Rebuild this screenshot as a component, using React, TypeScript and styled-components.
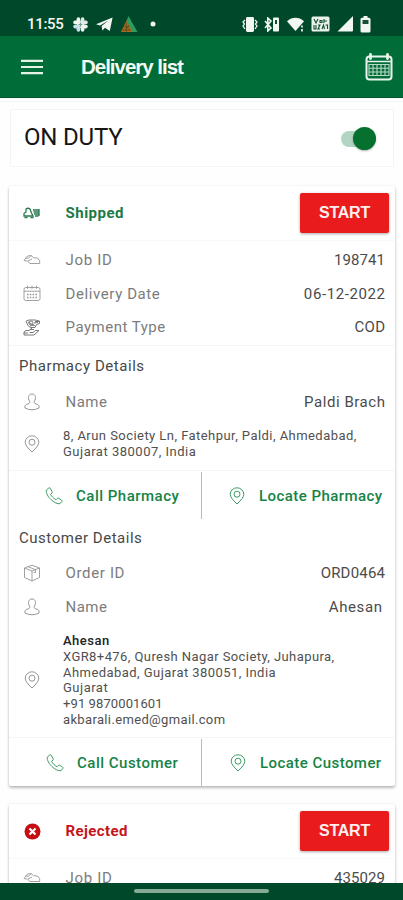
import React from "react";
import styled, { createGlobalStyle } from "styled-components";

const Global = createGlobalStyle`
  * { box-sizing: border-box; }
  body { margin: 0; background: #fefefe; font-family: Roboto, "Liberation Sans", sans-serif; }
`;

const Screen = styled.div`
  width: 100%;
  height: 900px;
  display: flex;
  flex-direction: column;
  overflow: hidden;
  background: #fefefe;
`;

const StatusBar = styled.div`
  flex: none;
  height: 36px;
  padding: 12px 32px 0 27px;
  display: flex;
  justify-content: space-between;
  background: #00482a;
  color: #f4f8f4;
`;

const StatusGroup = styled.div<{ $gap: number }>`
  display: flex;
  align-items: center;
  gap: ${(p) => p.$gap}px;
  height: 24px;
`;

const Clock = styled.span`
  font: 500 15px/24px Roboto, sans-serif;
  letter-spacing: -0.3px;
  width: 38px;
  white-space: nowrap;
`;

const Header = styled.header`
  flex: none;
  height: 62px;
  padding: 0 10px 0 21px;
  display: flex;
  align-items: center;
  background: #006c38;
  color: #f4faf4;
  border-bottom: 1px solid #005a2c;
`;

const Title = styled.h1`
  flex: 1;
  margin: 0 0 0 38px;
  font: 700 20.5px/28px "Liberation Sans", sans-serif;
  letter-spacing: -1.02px;
`;

const Content = styled.main`
  flex: 1;
  min-height: 0;
  overflow: hidden;
  margin-top: 3px;
  padding: 7px 8px 0 9px;
  border-top: 1px solid #eef5f4;
`;

const DutyCard = styled.section`
  height: 58px;
  margin: 0 1px 19px;
  padding: 1px 17px 0 13px;
  display: flex;
  align-items: center;
  justify-content: space-between;
  border: 1px solid #f3f4f4;
  border-radius: 2px;
  background: #fff;
`;

const DutyLabel = styled.span`
  font: 400 24px/28px Roboto, sans-serif;
  letter-spacing: -0.2px;
  color: #161616;
  margin-top: -3px;
`;

const SwitchTrack = styled.span`
  width: 35px;
  height: 16px;
  border-radius: 8px;
  background: #b0d5c2;
  display: flex;
  align-items: center;
  justify-content: flex-end;
`;

const SwitchThumb = styled.span`
  flex: none;
  width: 23px;
  height: 23px;
  border-radius: 50%;
  background: #06702f;
  box-shadow: 0 1px 2px rgba(0, 0, 0, 0.3);
`;

const Card = styled.article`
  height: 600px;
  margin-bottom: 18px;
  padding-right: 1px;
  background: #fff;
  border-radius: 2px;
  box-shadow: 0 2px 3px rgba(0, 0, 0, 0.26), 0 0 2px rgba(0, 0, 0, 0.1);
`;

const CardHead = styled.div`
  height: 55px;
  padding: 0 5px 0 12px;
  display: flex;
  align-items: center;
  border-bottom: 1px solid #f8f8f8;
`;

const Status = styled.span<{ $color: string; $ls: number }>`
  flex: 1;
  margin-left: 22.5px;
  font-weight: 700;
  font-size: 15px;
  letter-spacing: ${(p) => p.$ls}px;
  color: ${(p) => p.$color};
`;

const StartButton = styled.button`
  width: 89px;
  height: 40px;
  padding: 0;
  border: 0;
  border-radius: 2px;
  background: #e91b1d;
  color: #fff0ee;
  font: 700 16px/40px "Liberation Sans", sans-serif;
  letter-spacing: -0.25px;
  box-shadow: 0 1px 3px rgba(0, 0, 0, 0.35);
`;

const Rows = styled.div<{ $h: number; $pad: number }>`
  height: ${(p) => p.$h}px;
  padding-top: ${(p) => p.$pad}px;
  border-bottom: 1px solid #f5f5f5;
`;

const Row = styled.div<{ $h?: number }>`
  height: ${(p) => p.$h ?? 33.7}px;
  padding: 0 9px 0 12px;
  display: flex;
  align-items: center;
`;

const IconBox = styled.span`
  flex: none;
  width: 22px;
  height: 22px;
  display: flex;
  align-items: center;
  justify-content: center;
`;

const Label = styled.span<{ $ls: number }>`
  flex: 1;
  margin-left: 22.5px;
  font-size: 15px;
  letter-spacing: ${(p) => p.$ls}px;
  color: #7c7c7c;
`;

const Value = styled.span<{ $ls: number; $inset?: number }>`
  font-size: 15px;
  letter-spacing: ${(p) => p.$ls}px;
  margin-right: ${(p) => (p.$inset ?? 0) - p.$ls}px;
  color: #4b4b4b;
`;

const SectionTitle = styled.h2<{ $ls: number }>`
  margin: 0;
  height: 37px;
  padding-left: 10px;
  font: 400 15px/37px Roboto, sans-serif;
  letter-spacing: ${(p) => p.$ls}px;
  color: #484848;
`;

const Address = styled.div`
  margin-left: 20px;
  color: #505050;
`;

const AddressLine = styled.div<{ $ls: number; $strong?: boolean }>`
  font-size: 13px;
  line-height: 15.8px;
  white-space: nowrap;
  letter-spacing: ${(p) => p.$ls}px;
  font-weight: ${(p) => (p.$strong ? 500 : 400)};
  color: ${(p) => (p.$strong ? "#222" : "inherit")};
`;

const Actions = styled.div`
  height: 48px;
  padding-top: 1px;
  display: grid;
  grid-template-columns: 193px 1fr;
`;

const Action = styled.button<{ $left: number; $gap: number; $ls: number }>`
  border: 0;
  border-right: 1px solid transparent;
  background: transparent;
  padding: 0 0 0 ${(p) => p.$left}px;
  display: flex;
  align-items: center;
  gap: ${(p) => p.$gap}px;
  font: 500 15px/20px Roboto, sans-serif;
  letter-spacing: ${(p) => p.$ls}px;
  white-space: nowrap;
  color: #168345;
  &:first-child { border-right-color: #b9b9b9; }
`;

const NavBar = styled.footer`
  flex: none;
  height: 17px;
  display: flex;
  justify-content: center;
  padding-top: 6px;
  background: #00482a;
`;

const NavPill = styled.span`
  width: 135px;
  height: 4px;
  border-radius: 2px;
  background: #86aa94;
`;

const GRAY = "#969696";
const GREEN = "#3c9a68";

const SlackIcon = () => (
  <svg width="15" height="15" viewBox="0 0 15 15" fill="none" strokeWidth="3.6" strokeLinecap="round">
    <path d="M5.4 2v5M2 5.4h3" stroke="#f2f7f3" />
    <path d="M8 5.4h5M9.6 2v2" stroke="#dce9e8" />
    <path d="M9.6 8v5M10 9.6h3" stroke="#f2f7f3" />
    <path d="M2 9.6h5M5.4 11v2" stroke="#c9dfe8" />
    <path d="M6 7.500h3M7.500 6v3" stroke="#6f9b8b" strokeWidth="1" />
  </svg>
);
const PlaneIcon = () => (
  <svg width="17" height="15" viewBox="0 0 17 15">
    <path fill="#f2f7f3" d="M0 7.2 16.6.6 13.8 14 9 10.8 6.4 13.6 5.6 9 12.5 3.6 4 8.4z" />
  </svg>
);
const TreeIcon = () => (
  <svg width="17" height="16" viewBox="0 0 17 16">
    <path d="M7.5 0 16.5 16h-6L5.5 5z" fill="#2c9d5c" />
    <path d="M5.6 4.5 11.5 16H0z" fill="#b06a1e" />
    <path d="M3 11h6M1.5 14h9M5.5 7v9M4 9l5 6M8 9l-5 6" stroke="#4c4515" strokeWidth=".6" />
  </svg>
);
const DotIcon = () => (
  <svg width="14" height="6" viewBox="0 0 14 6">
    <circle cx="7" cy="3" r="2.500" fill="#eef6ef" />
  </svg>
);
const VibrateIcon = () => (
  <svg width="16" height="15" viewBox="0 0 16 15" fill="none" stroke="#f2f7f3" strokeWidth="1.3">
    <rect x="4" y="0" width="8" height="15" rx="1.4" fill="#f2f7f3" stroke="none" />
    <path d="m3 3-2 2 1.500 2L1 9l2 3M13 3l2 2-1.500 2L15 9l-2 3" />
  </svg>
);
const BluetoothIcon = () => (
  <svg width="16" height="15" viewBox="0 0 16 15">
    <path d="m1 4 6 7-3.200 3V1L7 4l-6 7" fill="none" stroke="#f2f7f3" strokeWidth="1.6" />
    <rect x="9" y=".5" width="6" height="14" rx="1" fill="#f2f7f3" />
    <rect x="11" y="3" width="2" height="4" fill="#174d34" />
  </svg>
);
const WifiIcon = () => (
  <svg width="18" height="15" viewBox="0 0 18 15">
    <path d="M0 4.200C5-.3 12-.3 17 4.200L8.500 14z" fill="#f2f7f3" />
    <path d="M15 8.500v2M15 12v2.500" stroke="#dce9e1" strokeWidth="1.8" />
  </svg>
);
const VolteIcon = () => (
  <svg width="19" height="16" viewBox="0 0 19 16" fill="none" stroke="#174d34" strokeWidth="1.100">
    <rect x=".5" y=".5" width="18" height="15" rx="1.500" fill="#e8f1ea" stroke="none" />
    <path d="m3 3 2 4 2-4M9 4.500h2v2H9zM13 3v4M13 5h3M3 9v4h2V9M7 9h2l-2 4h2M11 13l1.500-4 1 4M14.500 9h2v4" />
  </svg>
);
const SignalIcon = () => (
  <svg width="17" height="16" viewBox="0 0 17 16">
    <path d="M16 0v14.500q0 1-1 1H.5z" fill="#f2f7f3" />
  </svg>
);
const BatteryIcon = () => (
  <svg width="11" height="17" viewBox="0 0 11 17">
    <path d="M3.500 0h4v1.700H9q1.500 0 1.500 1.500V15q0 1.500-1.500 1.500H2Q.5 16.500.5 15V3.200Q.5 1.700 2 1.700h1.500z" fill="#f2f7f3" />
    <rect x="2.500" y="4" width="6" height="4" rx=".5" fill="#174d34" />
  </svg>
);
const MenuIcon = () => (
  <svg width="22" height="16" viewBox="0 0 22 16" stroke="#e6f2e6" strokeWidth="2.200">
    <path d="M0 1.900h22M0 8h22M0 14.100h22" />
  </svg>
);
const CalendarGridIcon = () => (
  <svg width="28" height="28" viewBox="0 0 28 28" fill="none" stroke="#e9f5ec">
    <rect x="1.500" y="3.500" width="25" height="23" rx="3" strokeWidth="2" />
    <path d="M5.500 1.500v4M22.500 1.500v4" strokeWidth="2.800" strokeLinecap="round" />
    <path d="M2 8.500h24" strokeWidth="1.500" />
    <path d="M4 11.500h20v11H4zM4 15.200h20M4 19h20M8 11.500v11M12 11.500v11M16 11.500v11M20 11.500v11" strokeWidth="1.100" opacity=".8" />
  </svg>
);
const ShippedIcon = () => (
  <svg width="18" height="13" viewBox="0 0 18 13" fill="none" stroke="#287b50" strokeWidth="1.300">
    <path d="M1 9V6.500L3 5V2q2-1.500 4 0l1.500 4L10 9H1z" />
    <path d="M1.500 10.500h3M7.500 10.500h3M10 3h6.500M10.500 5h6M11 7h5M12 9h3.500M16 2v7" />
  </svg>
);
const JobIcon = () => (
  <svg width="18" height="13" viewBox="0 0 18 13" fill="none" stroke={GRAY} strokeWidth=".9">
    <path d="M1 7.500 4.500 3 8 2.500l2.500 2.200 4 .3 2.200 2.800v2.700H7L4.500 8.200 1 7.500zM5 8l4-2" />
    <path d="m2.500 5 3 .3L8 2.500" />
  </svg>
);
const DateIcon = () => (
  <svg width="18" height="17" viewBox="0 0 18 17" fill="none" stroke={GRAY} strokeWidth=".9">
    <rect x="1" y="2.500" width="16" height="13" rx="1.800" />
    <path d="M1 6.200h16M4.500.8v3M9 .8v3M13.500.8v3" />
    <path d="M4 9.500h10M4 12.500h10" strokeWidth="1.300" strokeDasharray="1.500 1.300" />
  </svg>
);
const PaymentIcon = () => (
  <svg width="18" height="17" viewBox="0 0 18 17" fill="none" stroke="#777" strokeWidth="1">
    <path d="M3 2.200 6 1h6l4.500 1v2.500l-3 1-1.500 3H7.500L5 6.500z" />
    <circle cx="8" cy="4" r="2" />
    <path d="m5 3 7 4M12 2.500h4M11 4l4-.5M7 7l4-1M9 9l-3 2.500H3L1 13v3h10l5-4.500h-3.500L10 13.500H6.500M1 14h4M7 10.500h4" />
  </svg>
);
const PersonIcon = () => (
  <svg width="16" height="18" viewBox="0 0 16 18" fill="none" stroke={GRAY} strokeWidth="1">
    <path d="M5.600 8.200C4.500 6.800 4.300 4.700 4.700 3.300 5.100 1.700 6.300 1 8 1s2.900.7 3.300 2.300c.4 1.400.2 3.500-.9 4.900-.5.600-.3 1.900.6 2.300l2.600 1c1.600.7 1.700 2.300 1.300 3.600Q8 18.500 1.100 15.100c-.4-1.300-.3-2.900 1.300-3.600l2.600-1c.9-.4 1.100-1.700.6-2.300z" />
  </svg>
);
const PinIcon = ({ color = GRAY }: { color?: string }) => (
  <svg width="16" height="18" viewBox="0 0 16 18" fill="none" stroke={color} strokeWidth="1">
    <path d="M8 17Q1.200 10.800 1.200 7.300a6.800 6.500 0 0 1 13.600 0Q14.800 10.800 8 17z" />
    <circle cx="8" cy="7.200" r="3" />
  </svg>
);
const PhoneIcon = () => (
  <svg width="18" height="18" viewBox="0 0 18 18" fill="none" stroke={GREEN} strokeWidth="1">
    <path d="M3.800 1 1.300 3.100C.7 6 3.200 10 6 12.600c2.800 2.600 6.400 4.600 9 4.100l2-2.400q.3-.7-.4-1.200l-3-1.900q-.8-.4-1.300.2l-1.200 1.300C9.200 12 6.200 9 5.600 7.400L7 6q.5-.5.200-1.200L5.200 1.200Q4.500.4 3.800 1z" />
  </svg>
);
const BoxIcon = () => (
  <svg width="18" height="18" viewBox="0 0 18 18" fill="none" stroke={GRAY} strokeWidth=".9">
    <path d="M9 1.200 16.500 4v9.500L9 17l-7.500-3.500V4zM1.500 4 9 7l7.500-3M9 7v10M5 2.700l7.500 3v3l-2-.4" />
  </svg>
);
const RejectedIcon = () => (
  <svg width="17" height="17" viewBox="0 0 17 17">
    <circle cx="8.500" cy="8.500" r="8" fill="#c50f14" />
    <path d="m5.500 5.500 6 6m0-6-6 6" stroke="#fff" strokeWidth="2.200" />
  </svg>
);

type FieldProps = {
  icon: React.ReactNode;
  label: string;
  value: string;
  ls: number;
  vls: number;
  inset?: number;
};
const Field = ({ icon, label, value, ls, vls, inset }: FieldProps) => (
  <Row>
    <IconBox>{icon}</IconBox>
    <Label $ls={ls}>{label}</Label>
    <Value $ls={vls} $inset={inset}>{value}</Value>
  </Row>
);

export default function App() {
  return (
    <Screen>
      <Global />
      <StatusBar>
        <StatusGroup $gap={8}>
          <Clock>11:55</Clock>
          <SlackIcon />
          <PlaneIcon />
          <TreeIcon />
          <DotIcon />
        </StatusGroup>
        <StatusGroup $gap={6.5}>
          <VibrateIcon />
          <BluetoothIcon />
          <WifiIcon />
          <VolteIcon />
          <SignalIcon />
          <BatteryIcon />
        </StatusGroup>
      </StatusBar>
      <Header>
        <MenuIcon />
        <Title>Delivery list</Title>
        <CalendarGridIcon />
      </Header>
      <Content>
        <DutyCard>
          <DutyLabel>ON DUTY</DutyLabel>
          <SwitchTrack><SwitchThumb /></SwitchTrack>
        </DutyCard>
        <Card>
          <CardHead>
            <IconBox><ShippedIcon /></IconBox>
            <Status $color="#1c7a45" $ls={0.5}>Shipped</Status>
            <StartButton>START</StartButton>
          </CardHead>
          <Rows $h={105} $pad={2}>
            <Field icon={<JobIcon />} label="Job ID" value="198741" ls={0.7} vls={0.1} />
            <Field icon={<DateIcon />} label="Delivery Date" value="06-12-2022" ls={0.6} vls={0.6} />
            <Field icon={<PaymentIcon />} label="Payment Type" value="COD" ls={0.5} vls={0.3} />
          </Rows>
          <Rows $h={125} $pad={2}>
            <SectionTitle $ls={0.55}>Pharmacy Details</SectionTitle>
            <Field icon={<PersonIcon />} label="Name" value="Paldi Brach" ls={0.5} vls={0.55} />
            <Row $h={50}>
              <IconBox><PinIcon /></IconBox>
              <Address>
                <AddressLine $ls={0.45}>8, Arun Society Ln, Fatehpur, Paldi, Ahmedabad,</AddressLine>
                <AddressLine $ls={0.5}>Gujarat 380007, India</AddressLine>
              </Address>
            </Row>
          </Rows>
          <Actions>
            <Action $left={36} $gap={13} $ls={0.5}><PhoneIcon />Call Pharmacy</Action>
            <Action $left={27} $gap={14} $ls={0.45}><PinIcon color={GREEN} />Locate Pharmacy</Action>
          </Actions>
          <Rows $h={219} $pad={0.5}>
            <SectionTitle $ls={0.53}>Customer Details</SectionTitle>
            <Field icon={<BoxIcon />} label="Order ID" value="ORD0464" ls={0.65} vls={0.2} />
            <Field icon={<PersonIcon />} label="Name" value="Ahesan" ls={0.5} vls={0.6} inset={3} />
            <Row $h={113}>
              <IconBox><PinIcon /></IconBox>
              <Address>
                <AddressLine $ls={0.5} $strong>Ahesan</AddressLine>
                <AddressLine $ls={0.42}>XGR8+476, Quresh Nagar Society, Juhapura,</AddressLine>
                <AddressLine $ls={0.45}>Ahmedabad, Gujarat 380051, India</AddressLine>
                <AddressLine $ls={0.5}>Gujarat</AddressLine>
                <AddressLine $ls={0.1}>+91 9870001601</AddressLine>
                <AddressLine $ls={0.35}>akbarali.emed@gmail.com</AddressLine>
              </Address>
            </Row>
          </Rows>
          <Actions>
            <Action $left={37} $gap={13} $ls={0.5}><PhoneIcon />Call Customer</Action>
            <Action $left={28} $gap={14} $ls={0.45}><PinIcon color={GREEN} />Locate Customer</Action>
          </Actions>
        </Card>
        <Card>
          <CardHead>
            <IconBox><RejectedIcon /></IconBox>
            <Status $color="#c4161b" $ls={0.4}>Rejected</Status>
            <StartButton>START</StartButton>
          </CardHead>
          <Rows $h={106} $pad={2}>
            <Field icon={<JobIcon />} label="Job ID" value="435029" ls={0.7} vls={0.1} />
          </Rows>
        </Card>
      </Content>
      <NavBar><NavPill /></NavBar>
    </Screen>
  );
}
